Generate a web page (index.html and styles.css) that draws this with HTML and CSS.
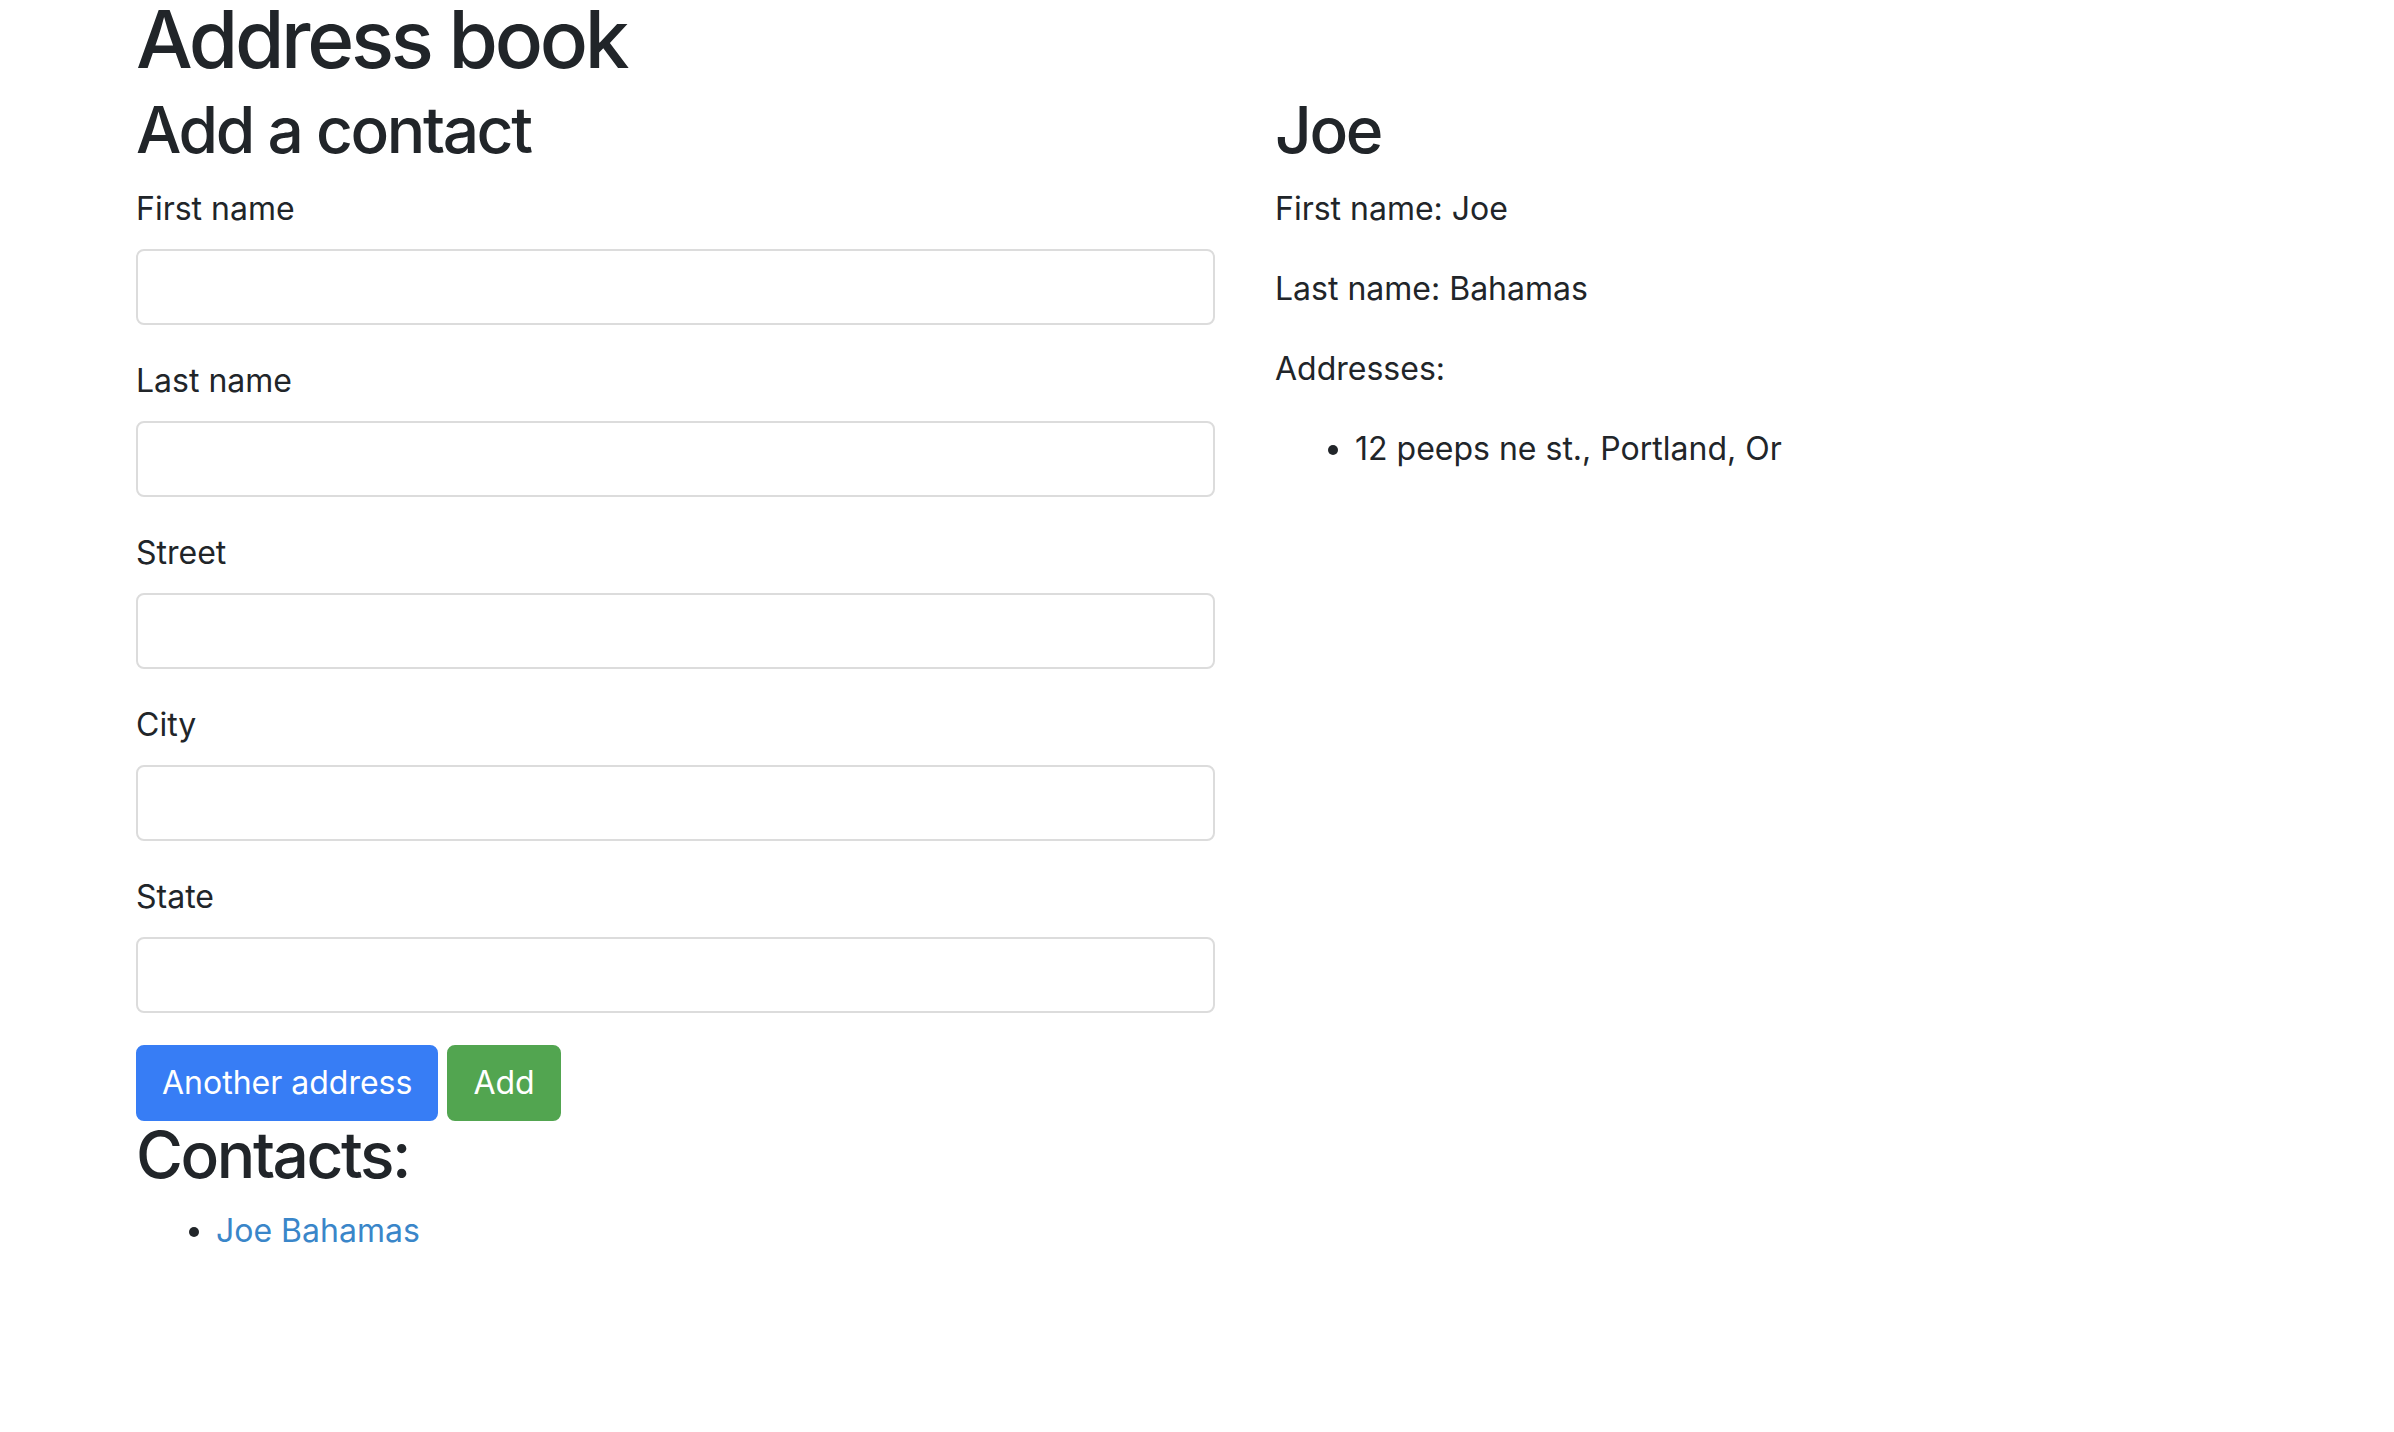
FILE: index.html
```html
<!DOCTYPE html>
<html lang="en">
<head>
<meta charset="utf-8">
<title>Address book</title>
<link rel="stylesheet" href="styles.css">
</head>
<body>
<div class="page">
  <h1 class="title">Address book</h1>
  <div class="row">
    <div class="col">
      <h2 class="heading">Add a contact</h2>
      <form class="form">
        <div class="form-group">
          <label class="label">First name</label>
          <input class="input" type="text">
        </div>
        <div class="form-group">
          <label class="label">Last name</label>
          <input class="input" type="text">
        </div>
        <div class="form-group">
          <label class="label">Street</label>
          <input class="input" type="text">
        </div>
        <div class="form-group">
          <label class="label">City</label>
          <input class="input" type="text">
        </div>
        <div class="form-group">
          <label class="label">State</label>
          <input class="input" type="text">
        </div>
        <div class="buttons">
          <button type="button" class="btn btn-primary">Another address</button>
          <button type="button" class="btn btn-success">Add</button>
        </div>
      </form>
      <h2 class="heading heading-tight">Contacts:</h2>
      <ul class="list">
        <li><a class="link" href="#">Joe Bahamas</a></li>
      </ul>
    </div>
    <div class="col">
      <h2 class="heading">Joe</h2>
      <p class="text">First name: Joe</p>
      <p class="text">Last name: Bahamas</p>
      <p class="text">Addresses:</p>
      <ul class="list">
        <li>12 peeps ne st., Portland, Or</li>
      </ul>
    </div>
  </div>
</div>
</body>
</html>
```
FILE: styles.css
```css
* { box-sizing: border-box; }
html, body { margin: 0; padding: 0; background: #fff; }
body {
  font-family: Inter, "Noto Sans", "Liberation Sans", sans-serif;
  font-size: 32px;
  line-height: 48px;
  color: #212529;
  overflow: hidden;
}
.page {
  padding-left: 136px;
  margin-top: -20px;
}
.title {
  font-size: 80px;
  font-weight: 500;
  line-height: 96px;
  margin: 11px 0 5px;
  letter-spacing: -3.3px;
}
.row {
  display: flex;
  gap: 60px;
}
.col {
  width: 1079px;
  flex: none;
}
.heading {
  font-size: 64px;
  font-weight: 500;
  line-height: 76.8px;
  margin: 0 0 16px;
  letter-spacing: -2.4px;
}
.heading-tight { margin: -4px 0 13px; }
.form { margin: 0; }
.form-group { margin-bottom: 32px; }
.label {
  display: inline-block;
  margin-bottom: 16px;
}
.input {
  display: block;
  width: 100%;
  height: 76px;
  padding: 12px 24px;
  font: inherit;
  border: 2px solid #dcdcdc;
  border-radius: 8px;
  background: #fff;
  outline: none;
}
.buttons { display: flex; gap: 9px; }
.btn {
  font: inherit;
  color: #fff;
  height: 76px;
  padding: 12px 24px;
  border: 2px solid transparent;
  border-radius: 8px;
  cursor: pointer;
}
.btn-primary { background: #377df5; border-color: #377df5; }
.btn-success { background: #52a550; border-color: #52a550; }
.text { margin: 0 0 32px; }
.list {
  margin: 0 0 32px;
  padding-left: 80px;
}
.link { color: #3a86c9; text-decoration: none; }
```
